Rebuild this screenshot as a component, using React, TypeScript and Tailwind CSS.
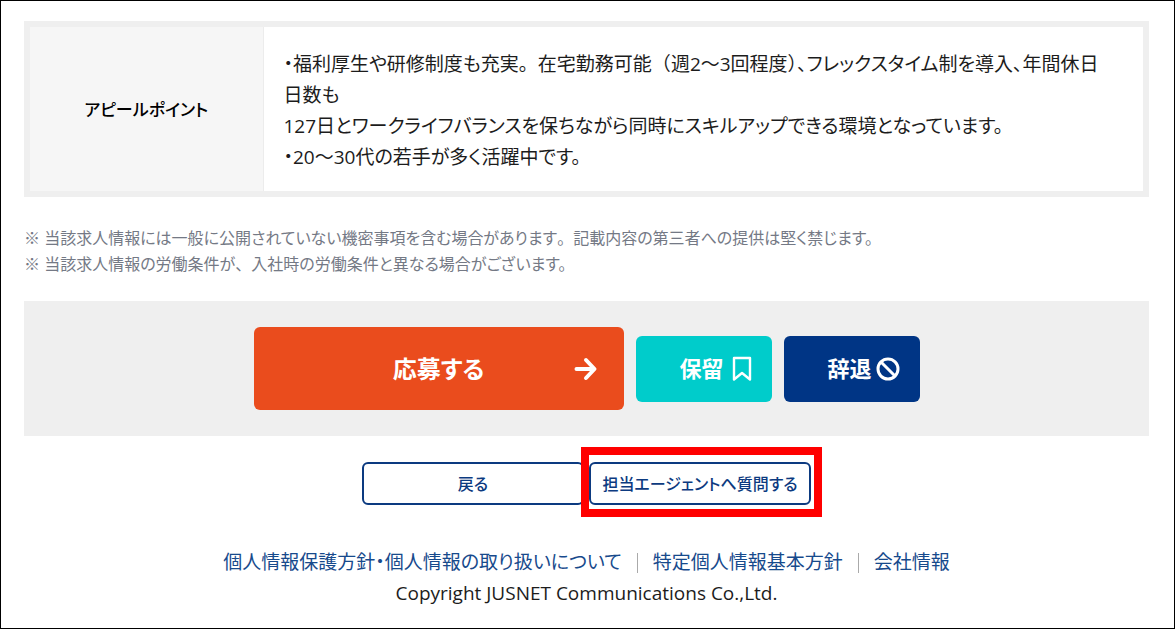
import type { ReactNode } from 'react';

const footerLinks = ['個人情報保護方針・個人情報の取り扱いについて', '特定個人情報基本方針', '会社情報'];

// 全角幅のまま表示する約物
function Full({ children }: { children: ReactNode }) {
  return <span className="[font-feature-settings:normal]">{children}</span>;
}

function ArrowIcon() {
  return (
    <svg width="24" height="24" viewBox="0 0 24 24" fill="none" stroke="currentColor" strokeWidth="4" strokeLinecap="round" strokeLinejoin="round" aria-hidden="true">
      <path d="M2.5 12h17M12 3l8.5 9-8.5 9" />
    </svg>
  );
}

function BookmarkIcon() {
  return (
    <svg width="20" height="26" viewBox="0 0 20 26" fill="none" stroke="currentColor" strokeWidth="2.4" strokeLinejoin="round" aria-hidden="true">
      <path d="M2 2h16v21.5l-8-6.5-8 6.5z" />
    </svg>
  );
}

function BanIcon() {
  return (
    <svg width="24" height="24" viewBox="0 0 24 24" fill="none" stroke="currentColor" strokeWidth="3" aria-hidden="true">
      <circle cx="12" cy="12" r="10" />
      <path d="M5 5l14 14" />
    </svg>
  );
}

function OutlineButton({ children }: { children: ReactNode }) {
  return (
    <button type="button" className="block h-[43px] w-[222px] rounded-md border-2 border-[#0c3a80] bg-white text-[16px] font-medium text-[#0c3a80]">
      {children}
    </button>
  );
}

export default function App() {
  return (
    <div className="min-h-screen border border-black bg-white pt-5 pr-[25px] pl-[23px] font-['Open_Sans','Noto_Sans_CJK_JP',sans-serif] text-[#1c1c1c] [font-feature-settings:'palt']">
      <table className="w-full border-collapse border-[6px] border-[#efefef] text-[19px] leading-[31px]">
        <tbody>
          <tr>
            <th scope="row" className="w-[236px] border-r border-[#ececec] bg-[#f6f6f6] text-[17px] font-medium text-black">アピールポイント</th>
            <td className="pt-[22px] pr-4 pb-[18px] pl-5">
              ・福利厚生や研修制度も充実<Full>。</Full>在宅勤務可能<Full>（</Full>週2～3回程度<Full>）</Full>、フレックスタイム制を導入、年間休日
              <br />
              日数も
              <br />
              127日とワークライフバランスを保ちながら同時にスキルアップできる環境となっています。
              <br />
              ・20～30代の若手が多く活躍中です。
            </td>
          </tr>
        </tbody>
      </table>

      <div className="mt-7 text-[16px] leading-[26px] text-[#747985]">
        <p>※ 当該求人情報には一般に公開されていない機密事項を含む場合があります<Full>。</Full>記載内容の第三者への提供は堅く禁じます。</p>
        <p>※ 当該求人情報の労働条件が<Full>、</Full>入社時の労働条件と異なる場合がございます。</p>
      </div>

      <div className="mt-6 flex items-center justify-center gap-3 bg-[#efefef] py-[26px] font-bold text-white">
        <button type="button" className="grid h-[83px] w-[370px] grid-cols-[1fr_auto_1fr] items-center rounded-md bg-[#ea4c1d] px-[26px] text-[24px]">
          <span className="col-start-2">応募する</span>
          <span className="justify-self-end"><ArrowIcon /></span>
        </button>
        <button type="button" className="flex h-[66px] w-[136px] items-center justify-end gap-2 rounded-md bg-[#00cccb] pr-5 text-[22px]">
          保留<BookmarkIcon />
        </button>
        <button type="button" className="flex h-[66px] w-[136px] items-center justify-end gap-1 rounded-md bg-[#003585] pr-5 text-[22px]">
          辞退<BanIcon />
        </button>
      </div>

      <div className="mt-[26px] flex justify-center gap-[5px]">
        <OutlineButton>戻る</OutlineButton>
        <div className="relative">
          <OutlineButton>担当エージェントへ質問する</OutlineButton>
          {/* 強調枠 */}
          <div className="pointer-events-none absolute -top-[15px] -right-[11px] -bottom-3 -left-2 border-8 border-[#ff0000]" />
        </div>
      </div>

      <footer className="mt-[42px] text-center text-[19px] leading-[31px]">
        <nav className="flex justify-center">
          {footerLinks.map((label, i) => (
            <span key={label} className="flex items-center">
              {i > 0 && <span className="mx-[15px] h-5 w-px bg-[#aaaaaa]" />}
              <a href="#" className="text-[#174a8c]">{label}</a>
            </span>
          ))}
        </nav>
        <p>Copyright JUSNET Communications Co.,Ltd.</p>
      </footer>
    </div>
  );
}
